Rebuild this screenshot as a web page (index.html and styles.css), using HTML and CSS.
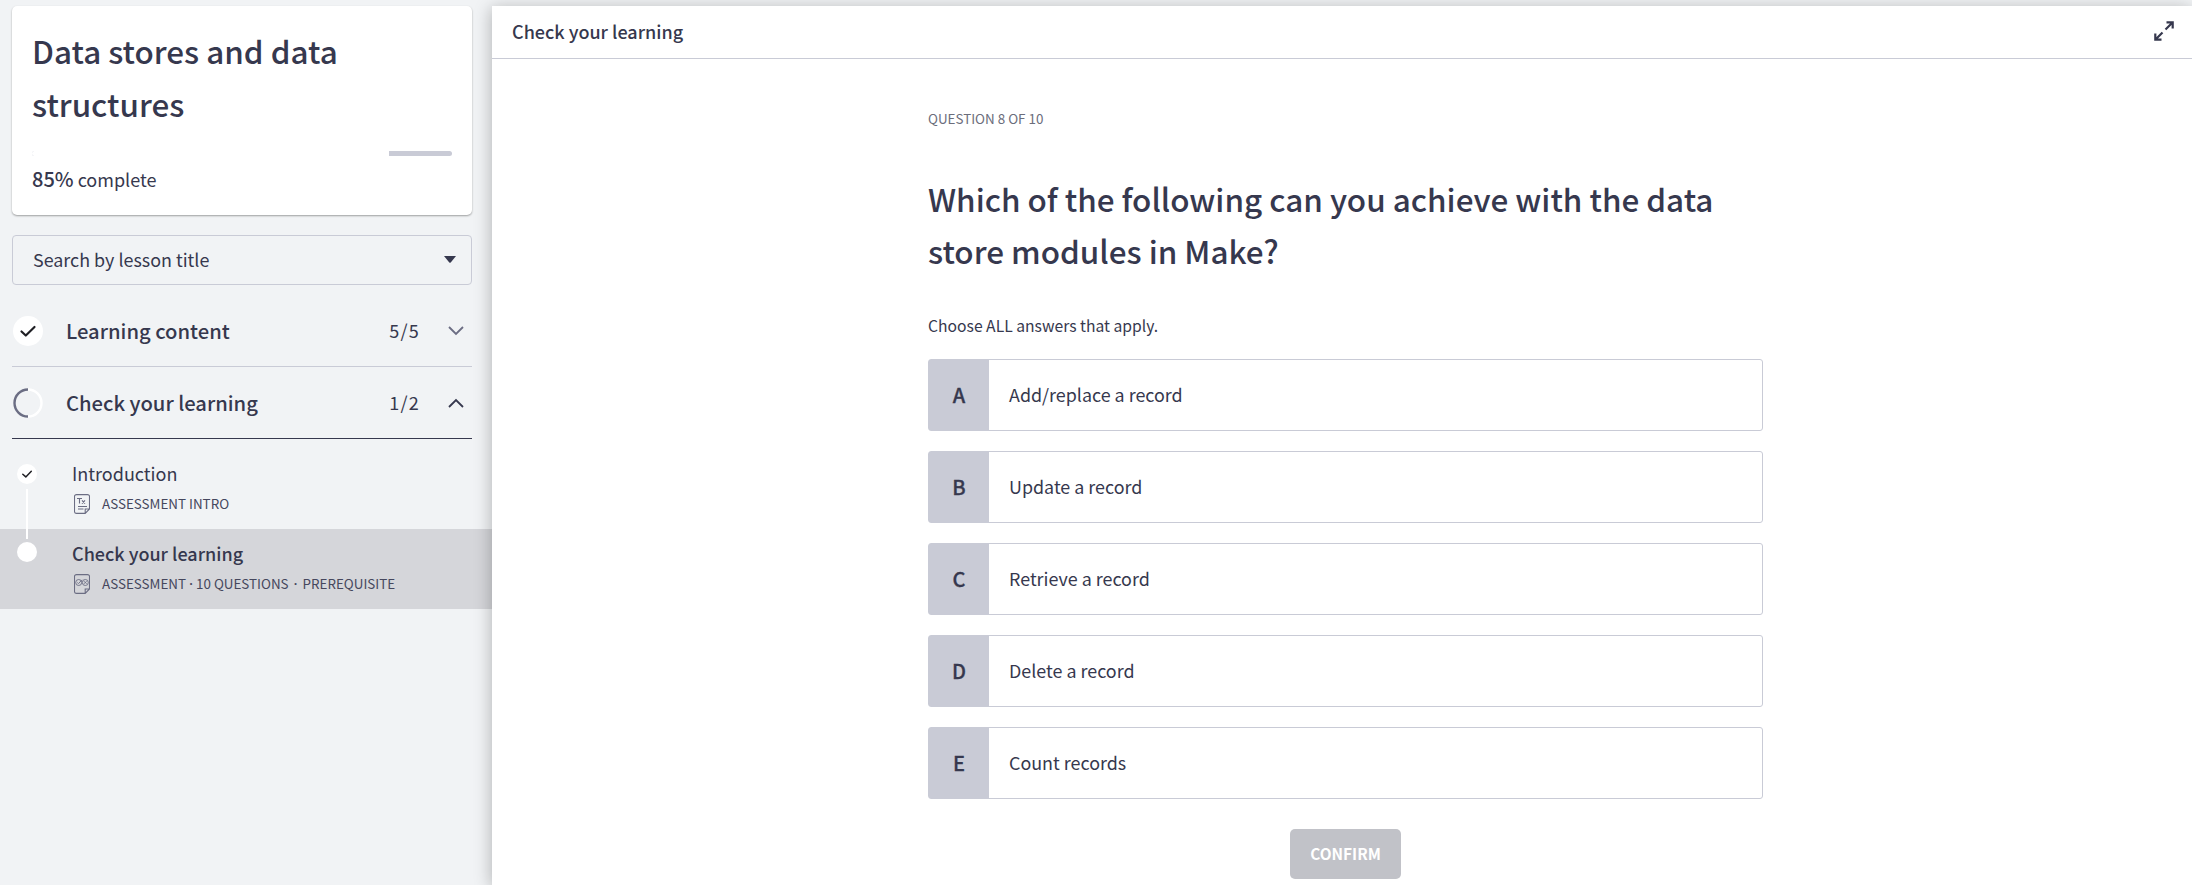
FILE: index.html
```
<!DOCTYPE html>
<html lang="en">
<head>
<meta charset="utf-8">
<title>Check your learning</title>
<link rel="stylesheet" href="styles.css">
</head>
<body>
<div class="app">
  <aside class="sidebar">
    <section class="course-card">
      <h1 class="course-title">Data stores and data<br>structures</h1>
      <div class="progress"><div class="progress-fill" style="width:85%"></div></div>
      <p class="progress-label"><strong>85%</strong> complete</p>
    </section>
    <div class="search"><span class="search-text">Search by lesson title</span>
      <svg class="caret" viewBox="0 0 12 7"><path d="M0 0h12L6.700 6.500q-.7.700-1.400 0z"/></svg>
    </div>
    <div class="section">
      <svg class="status" viewBox="0 0 30 30"><circle cx="15" cy="15" r="15" fill="#fff"/><path d="M8.500 15.500l4.300 4L21.500 11" fill="none" stroke="#1f1f24" stroke-width="2.200" stroke-linecap="round" stroke-linejoin="round"/></svg>
      <span class="section-title">Learning content</span>
      <span class="count">5/5</span>
      <svg class="chevron muted" viewBox="0 0 16 10"><path d="M1 1l7 7 7-7"/></svg>
    </div>
    <div class="section open">
      <svg class="status" viewBox="0 0 30 30" fill="none" stroke-width="2.400"><path d="M15 1.500a13.500 13.500 0 0 1 0 27" stroke="#fff"/><path d="M15 28.500a13.500 13.500 0 0 1 0-27" stroke="#6b6d83"/></svg>
      <span class="section-title">Check your learning</span>
      <span class="count">1/2</span>
      <svg class="chevron" viewBox="0 0 16 10"><path d="M1 9l7-7 7 7"/></svg>
    </div>
    <ul class="lessons">
      <li class="lesson">
        <svg class="dot" viewBox="0 0 20 20"><circle cx="10" cy="10" r="10" fill="#fff"/><path d="M5.800 10.200l3 2.700 5.500-5.700" fill="none" stroke="#1f1f24" stroke-width="1.500" stroke-linecap="round" stroke-linejoin="round"/></svg>
        <span class="lesson-name">Introduction</span>
        <div class="meta">
          <svg class="doc" viewBox="0 0 16 20"><path d="M2.500.6h11a2 2 0 0 1 2 2V15l-4.300 4.400H2.500a2 2 0 0 1-2-2V2.600a2 2 0 0 1 2-2zM15.300 15h-4.100v4.200M3 4.500h5M5.500 4.500v5M8 6.300l3 3.400M11 6.300L8 9.700M4 12.500h9M4 15h5.500"/></svg>
          <span>ASSESSMENT INTRO</span>
        </div>
      </li>
      <li class="lesson active">
        <svg class="dot" viewBox="0 0 20 20"><circle cx="10" cy="10" r="10" fill="#fff"/></svg>
        <span class="lesson-name">Check your learning</span>
        <div class="meta">
          <svg class="doc" viewBox="0 0 16 20"><path d="M2.500.6h11a2 2 0 0 1 2 2V15l-4.300 4.400H2.500a2 2 0 0 1-2-2V2.600a2 2 0 0 1 2-2zM15.300 15h-4.100v4.200"/><g stroke-width=".9"><circle cx="4.700" cy="8.500" r="3"/><circle cx="11.300" cy="8.500" r="3"/><path d="M3.300 8.500l1.200 1.100L8 5.800M10 7.200l2.600 2.600M12.600 7.200L10 9.800"/></g></svg>
          <span>ASSESSMENT</span><i class="sep">·</i><span>10 QUESTIONS</span><i class="sep wide">·</i><span>PREREQUISITE</span>
        </div>
      </li>
    </ul>
  </aside>
  <main class="main">
    <header class="topbar"><span class="topbar-title">Check your learning</span>
      <svg class="expand" viewBox="0 0 20 20"><path d="M11.500 8.500l7-7M12.500 1.300h6.200v6.200M8.500 11.500l-7 7M1.300 12.500v6.200h6.200"/></svg>
    </header>
    <div class="question">
      <p class="eyebrow">QUESTION 8 OF 10</p>
      <h2 class="prompt">Which of the following can you achieve with the data<br>store modules in Make?</h2>
      <p class="hint">Choose ALL answers that apply.</p>
      <div class="options">
        <div class="option"><b class="key">A</b><span class="answer">Add/replace a record</span></div>
        <div class="option"><b class="key">B</b><span class="answer">Update a record</span></div>
        <div class="option"><b class="key">C</b><span class="answer">Retrieve a record</span></div>
        <div class="option"><b class="key">D</b><span class="answer">Delete a record</span></div>
        <div class="option"><b class="key">E</b><span class="answer">Count records</span></div>
      </div>
      <button class="confirm">CONFIRM</button>
    </div>
  </main>
</div>
</body>
</html>
```
FILE: styles.css
```
* { box-sizing: border-box; }
body {
  margin: 0;
  height: 885px;
  overflow: hidden;
  font-family: "Noto Sans CJK SC", "Noto Sans", sans-serif;
  font-size: 18px;
  color: #36384e;
  background: #f1f3f5;
}
h1, h2, p, ul { margin: 0; padding: 0; font-weight: 400; }
ul { list-style: none; }
strong, b { font-weight: 500; }
.app { display: flex; height: 885px; padding-top: 6px; }
.sidebar { width: 492px; flex: none; }

.course-card {
  width: 460px;
  height: 209px;
  margin-left: 12px;
  padding: 18px 20px 0;
  background: #fff;
  border-radius: 5px;
  box-shadow: 0 1px 2px rgba(0, 0, 0, .35);
}
.course-title { font-size: 31.400px; line-height: 53px; font-weight: 500; }
.progress { height: 5px; margin-top: 21px; border-radius: 3px; background: #c9cbd6; overflow: hidden; }
.progress-fill { height: 5px; background: #fff; }
.progress-label { margin-top: 7px; line-height: 32px; }
.progress-label strong { font-size: 20px; }
.search {
  display: flex;
  align-items: center;
  justify-content: space-between;
  width: 460px;
  height: 50px;
  margin: 20px 0 10px 12px;
  padding: 0 15px 0 20px;
  border: 1px solid #c9cbd6;
  border-radius: 4px;
}
.search-text { padding-bottom: 3px; font-size: 17.900px; }
.caret { width: 12px; height: 7px; margin-bottom: 1px; fill: #36384e; }

.section {
  display: flex;
  align-items: center;
  width: 460px;
  height: 72px;
  margin-left: 12px;
  padding-right: 8px;
  border-bottom: 1px solid #c9cbd6;
}
.section.open { border-color: #36384e; }
.status { width: 30px; height: 30px; margin-left: 1px; }
.section-title { margin-left: 23px; font-size: 20.200px; font-weight: 500; }
.count { margin-left: auto; padding-bottom: 2px; letter-spacing: 1.200px; }
.chevron { width: 16px; height: 10px; margin-left: 28px; fill: none; stroke: #36384e; stroke-width: 1.800; }
.chevron.muted { stroke: #6b6d83; }

.lessons { padding-top: 10px; }
.lesson { position: relative; height: 80px; padding: 9px 0 0 72px; line-height: 30px; }
.lesson.active { background: #d5d6da; }
.lesson.active .lesson-name { font-weight: 500; }
.lesson:first-child::after {
  content: "";
  position: absolute;
  z-index: 1;
  left: 26px;
  top: 40px;
  width: 2px;
  height: 50px;
  background: #fff;
}
.dot { position: absolute; left: 17px; top: 15px; width: 20px; height: 20px; }
.active .dot { top: 13px; }
.lesson-name { display: block; }
.meta { display: flex; align-items: center; height: 31px; font-size: 13.400px; color: #45475d; }
.meta span { padding-bottom: 2px; }
.doc { width: 16px; height: 20px; margin: 0 12px 0 2px; fill: none; stroke: #6b6d83; stroke-width: 1.100; }
.sep { width: 10px; font: 600 13px "Noto Sans", sans-serif; text-align: center; }
.sep.wide { width: 14px; }

.main {
  position: relative;
  z-index: 2;
  flex: 1;
  background: #fff;
  box-shadow: -1px 2px 16px rgba(0, 0, 0, .26);
}
.topbar {
  display: flex;
  align-items: center;
  justify-content: space-between;
  height: 53px;
  padding: 0 18px 0 20px;
  border-bottom: 1px solid #c9cbd6;
}
.topbar-title { padding-bottom: 3px; font-weight: 500; }
.expand { width: 20px; height: 20px; margin-bottom: 2px; fill: none; stroke: #36384e; stroke-width: 2.200; }
.question { width: 835px; margin-left: 436px; padding-top: 43px; }
.eyebrow { font-size: 13.400px; line-height: 32px; color: #6b6d7b; }
.prompt { margin-top: 39px; font-size: 31.450px; line-height: 52px; font-weight: 500; }
.hint { margin-top: 33px; font-size: 15.700px; line-height: 32px; }
.options { display: grid; gap: 20px; margin-top: 17px; }
.option { display: flex; height: 72px; border: 1px solid #c9cbd6; border-radius: 3px; line-height: 70px; }
.key { width: 60px; background: #c9cbd6; text-align: center; font-size: 20px; -webkit-text-stroke: .3px #36384e; }
.answer { margin-left: 20px; line-height: 69px; font-size: 17.900px; }
.confirm {
  display: block;
  width: 111px;
  height: 50px;
  margin: 30px auto 0;
  padding: 0 0 2px;
  border: 0;
  border-radius: 5px;
  background: #c1c2c8;
  color: #fff;
  font: 700 15.400px "Noto Sans CJK SC", sans-serif;
}
```
